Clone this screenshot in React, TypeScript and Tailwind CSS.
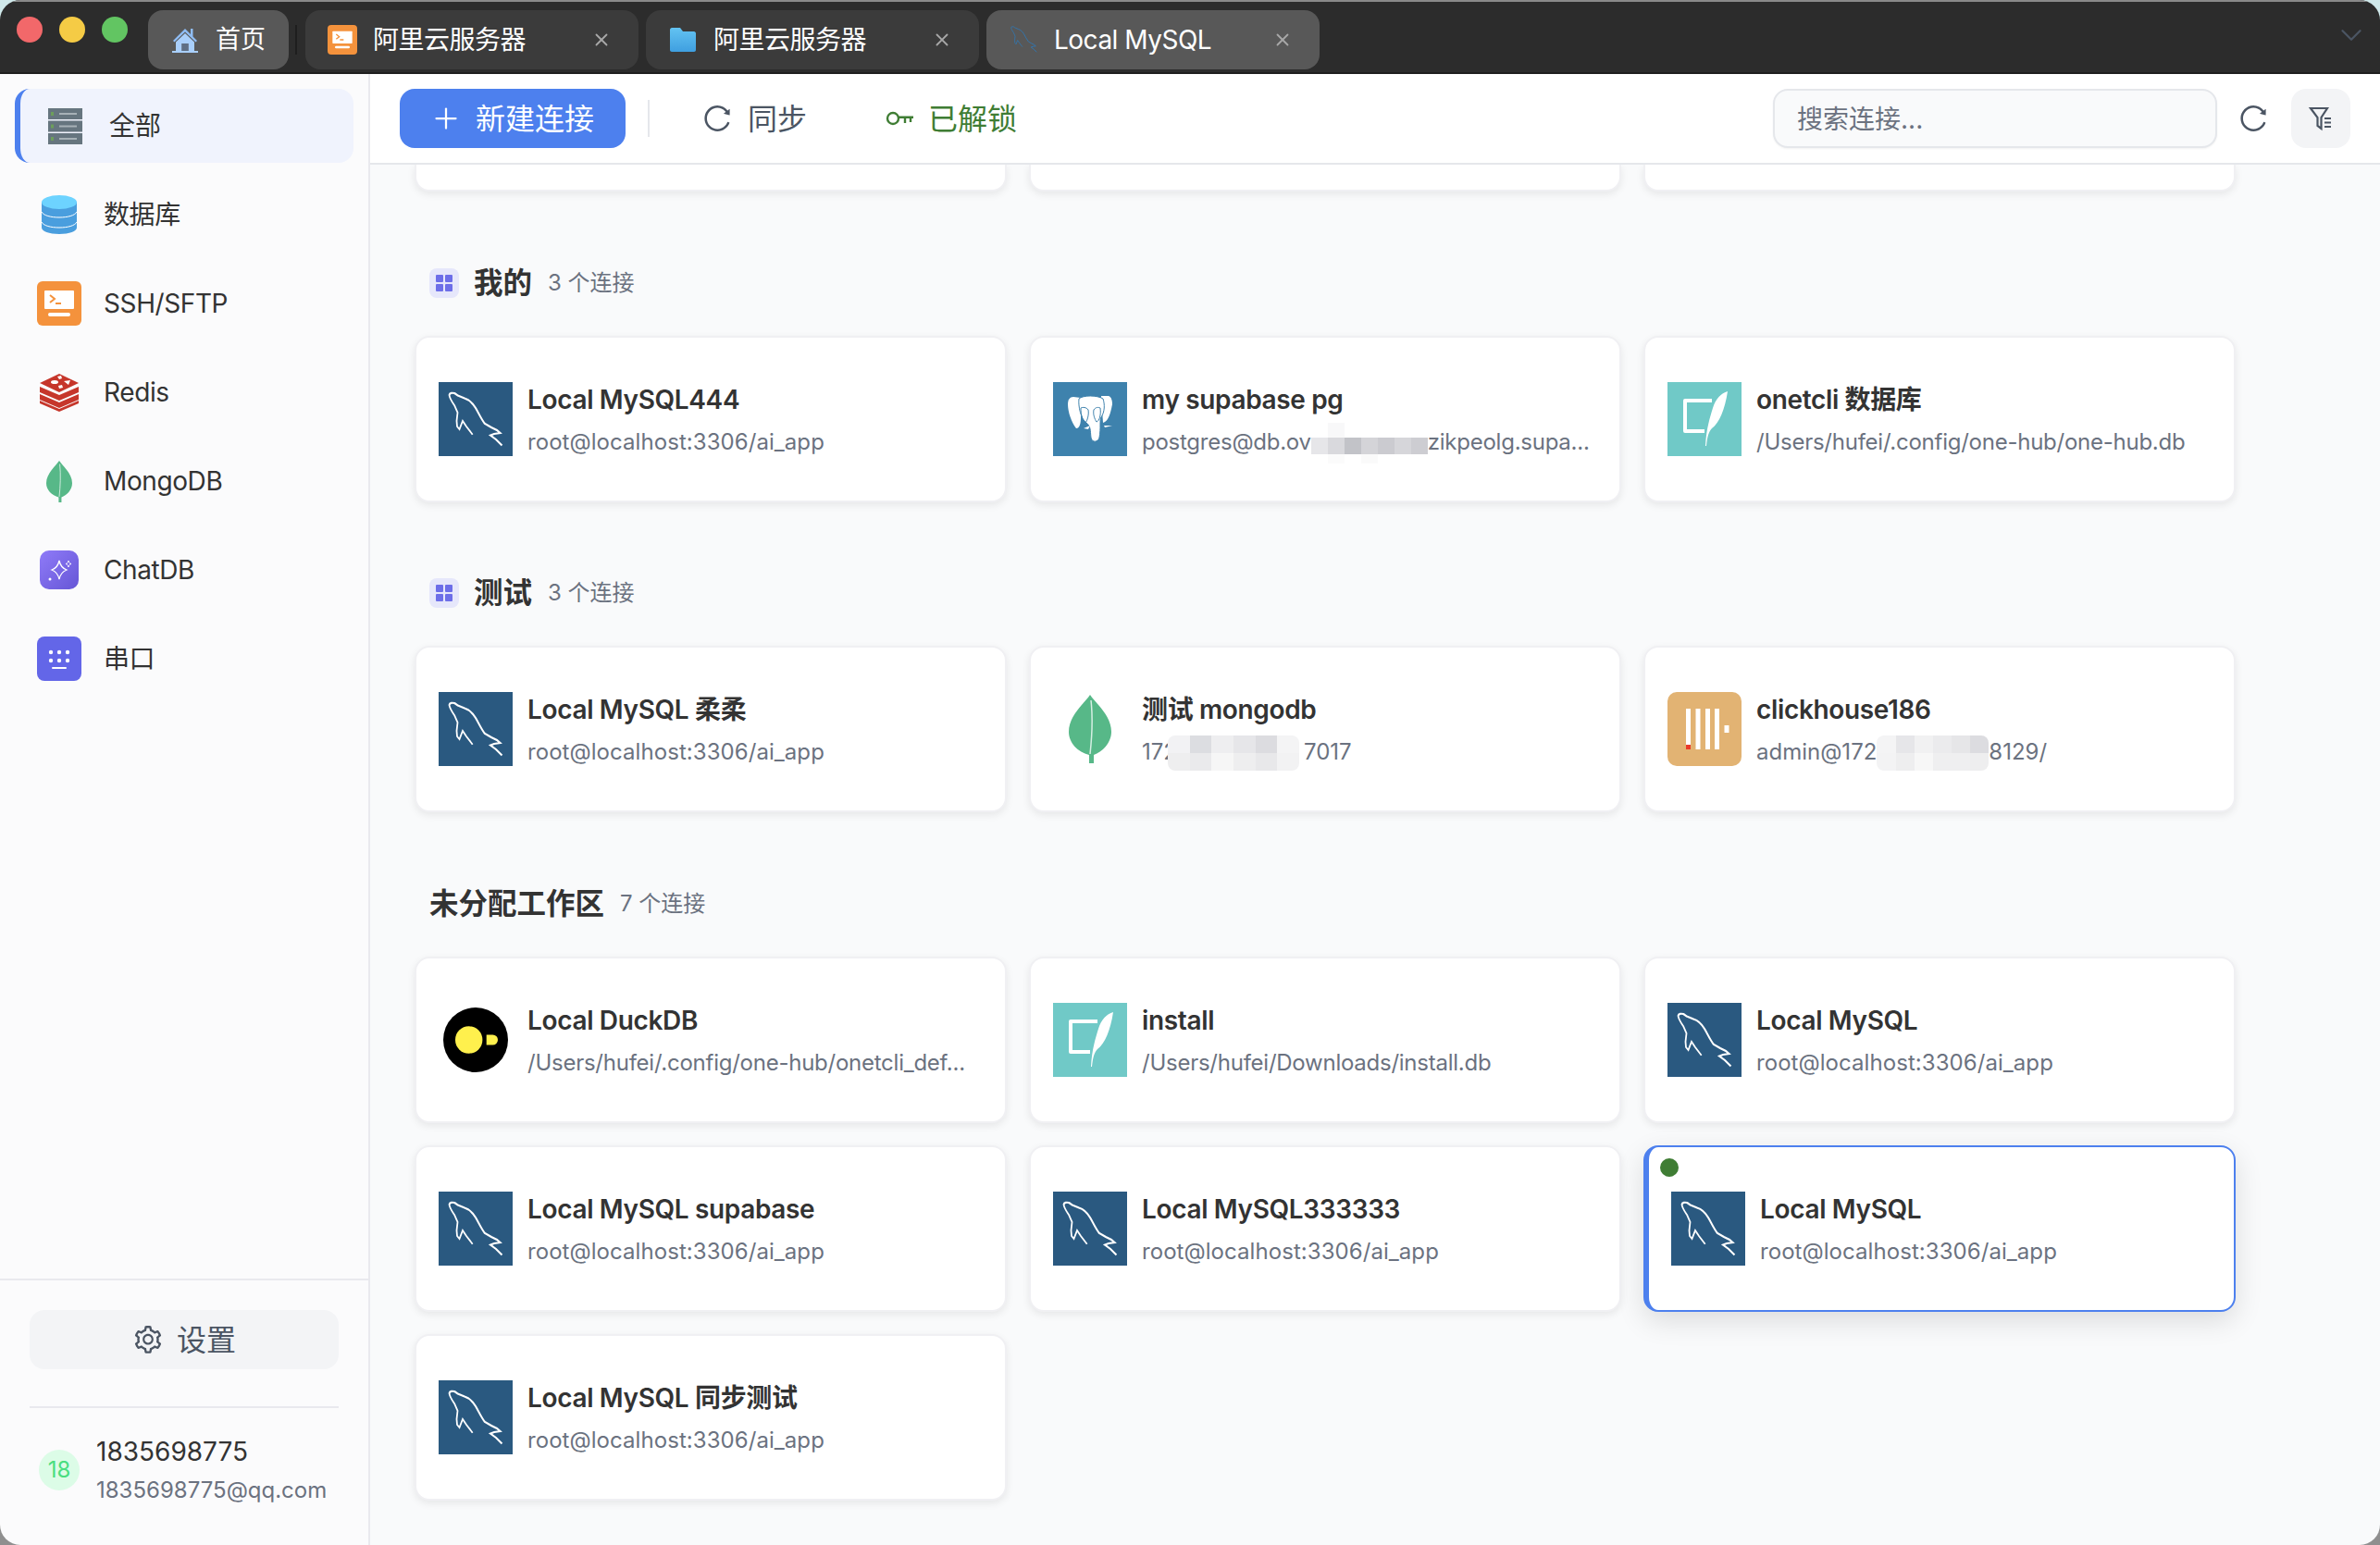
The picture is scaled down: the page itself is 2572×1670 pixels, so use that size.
import React from 'react';
import { ChevronDown, Plus, X } from 'lucide-react';
import { AiOutlineReload, AiOutlineSetting } from 'react-icons/ai';

const DOLPHIN_TOP = 'M11.5 14C12 11.5 15 11.5 17 12C19 13 20 14.5 22 15L28 17.5C33 19 37 23 40 28C43 33 46 40 50 45L57 49L63 52L66.5 55L60 56L56 57.5L62 62L68.5 68.5';
const DOLPHIN_BELLY = 'M11.5 14C12 18 15 22 17 25L20.5 33L19.5 42L20 48L22.5 51L26 42L30 48L36.7 56.7';

function MysqlIcon() {
  return (
    <svg width="80" height="80" viewBox="0 0 80 80" className="shrink-0">
      <rect width="80" height="80" fill="#2a5980" />
      <path d={DOLPHIN_TOP} fill="none" stroke="#fff" strokeWidth="2.1" />
      <path d={DOLPHIN_BELLY} fill="none" stroke="#fff" strokeWidth="1.8" />
    </svg>
  );
}

function PostgresIcon() {
  return (
    <svg width="80" height="80" viewBox="0 0 80 80" className="shrink-0">
      <rect width="80" height="80" fill="#3e82ad" />
      <path d="M22 16C18 16 16 19 16 24C16 32 20 44 25 50C29 50 30 44 30 38L30 17Z" fill="#fff" />
      <path d="M52 15L60 15C63 16 64 20 64 24C62 34 60 42 54 44Z" fill="#fff" />
      <path d="M28 18C32 14 48 14 54 18C56 24 56 32 52 38C50 40 52 50 50 60C49 65 42 66 41 60C40 52 41 48 36 44C30 40 27 26 28 18Z" fill="#fff" stroke="#3e82ad" strokeWidth="1" />
      <path d="M30 28C32 27 36 27 38 30C39 35 37 42 35 44C32 42 30 36 30 28Z" fill="none" stroke="#3e82ad" strokeWidth="1" />
      <path d="M51 28C49 27 46 27 44 30C43 35 45 40 47 43C50 42 52 36 51 28Z" fill="none" stroke="#3e82ad" strokeWidth="1" />
      <path d="M33 50L40 47L38 51Z" fill="#fff" />
      <path d="M55 47L64 47L56 49Z" fill="#fff" />
    </svg>
  );
}

function SqliteIcon() {
  return (
    <svg width="80" height="80" viewBox="0 0 80 80" className="shrink-0">
      <rect width="80" height="80" fill="#70c9c7" />
      <path d="M48 20H19V53H40" fill="none" stroke="#fff" strokeWidth="4" strokeLinejoin="round" />
      <path d="M65 10C58 12 52 18 49 28C46 38 42 50 41 69L42 69C43 58 45 53 48 50C56 44 62 30 65 10Z" fill="#fff" />
    </svg>
  );
}

function LeafIcon({ w, h }: { w: number; h: number }) {
  return (
    <svg width={w} height={h} viewBox="0 0 46 74" className="shrink-0">
      <path d="M23 0C28 8 46 22 46 40C46 52 36 62 27 65L27 74L22 74L22 65C10 62 0 52 0 40C0 22 18 8 23 0Z" fill="#57b888" />
      <path d="M24 6C26 24 25 46 23 64" fill="none" stroke="#d6efe3" strokeWidth="1.5" />
    </svg>
  );
}

function ClickhouseIcon() {
  return (
    <svg width="80" height="80" viewBox="0 0 80 80" className="shrink-0">
      <rect width="80" height="80" rx="10" fill="#e2b373" />
      <rect x="20" y="18" width="5" height="44" fill="#fff" />
      <rect x="30.5" y="18" width="5" height="44" fill="#fff" />
      <rect x="41" y="18" width="5" height="44" fill="#fff" />
      <rect x="51" y="18" width="5" height="44" fill="#fff" />
      <rect x="61.5" y="36" width="5" height="8" fill="#fff" />
      <rect x="20" y="57" width="5" height="5" fill="#ea3a2a" />
    </svg>
  );
}

function DuckdbIcon() {
  return (
    <svg width="80" height="80" viewBox="0 0 80 80" className="shrink-0">
      <circle cx="40" cy="40" r="35" fill="#000" />
      <circle cx="32.7" cy="40" r="14.7" fill="#fff04d" />
      <path d="M51.7 34.5H58.5A5.5 5.5 0 0 1 58.5 45.5H51.7Z" fill="#fff04d" />
    </svg>
  );
}

function TerminalIcon({ size }: { size: number }) {
  return (
    <svg width={size} height={size} viewBox="0 0 48 48" className="shrink-0">
      <rect width="48" height="48" rx="6" fill="#f4923c" />
      <rect x="8" y="10" width="32" height="20" rx="1" fill="#fff" />
      <path d="M14 15L19 19L14 23M20 24H26" fill="none" stroke="#f4923c" strokeWidth="2" />
      <rect x="12" y="34" width="24" height="4" rx="2" fill="#fff" />
    </svg>
  );
}

function FolderIcon() {
  return (
    <svg width="28" height="26" viewBox="0 0 28 26" className="shrink-0">
      <defs>
        <linearGradient id="folderFill" x1="0" y1="0" x2="0" y2="1">
          <stop offset="0" stopColor="#63c3f2" />
          <stop offset="1" stopColor="#3f9fe0" />
        </linearGradient>
      </defs>
      <path d="M0 2C0 1 1 0 2 0H11L14 4H26C27 4 28 5 28 6V24C28 25 27 26 26 26H2C1 26 0 25 0 24Z" fill="url(#folderFill)" />
    </svg>
  );
}

function HomeIcon() {
  return (
    <svg width="28" height="28" viewBox="0 0 28 28" className="shrink-0">
      <path d="M14 2L1 15L2.5 16.5L14 5.5L25.5 16.5L27 15L22.5 10.5V2H20V8Z" fill="#8fbdf5" />
      <path d="M4 16.5L14 7L24 16.5V26H17.5V18H10.5V26H4Z" fill="#a9cffb" />
      <rect x="10.5" y="18" width="7" height="8" fill="#5f6f85" />
      <rect y="26" width="28" height="2" fill="#a9cffb" />
    </svg>
  );
}

function TabDolphin() {
  return (
    <svg width="32" height="32" viewBox="6 8 66 66" className="shrink-0">
      <path d={DOLPHIN_TOP} fill="none" stroke="#2f78b5" strokeWidth="1.8" />
      <path d={DOLPHIN_BELLY} fill="none" stroke="#2f78b5" strokeWidth="1.6" />
    </svg>
  );
}

function ServerStackIcon() {
  return (
    <svg width="37" height="39" viewBox="0 0 37 39" className="shrink-0">
      {[0, 13.5, 27].map((y) => (
        <g key={y}>
          <rect y={y} width="37" height="12" fill="#66757f" />
          <rect x="3" y={y + 4} width="3" height="4" fill="#6d9e5b" />
          <rect x="12" y={y + 5} width="19" height="2" fill="#a7b1b7" />
        </g>
      ))}
    </svg>
  );
}

function DatabaseIcon() {
  return (
    <svg width="38" height="42" viewBox="0 0 38 42" className="shrink-0">
      <path d="M0 7V35C0 39 8 42 19 42C30 42 38 39 38 35V7Z" fill="#4a9ede" />
      <ellipse cx="19" cy="7.5" rx="19" ry="7.5" fill="#6dd3ff" />
      <path d="M0 18C2 22 10 24 19 24C28 24 36 22 38 18M0 29C2 33 10 35 19 35C28 35 36 33 38 29" fill="none" stroke="#fff" strokeWidth="1" />
    </svg>
  );
}

function RedisIcon() {
  return (
    <svg width="42" height="41" viewBox="0 0 42 41" className="shrink-0">
      <path d="M0 22L21 31L42 22V28L21 37L0 28Z" fill="#c6362b" />
      <path d="M0 29L21 38L42 29V32L21 41L0 32Z" fill="#c6362b" />
      <path d="M0 14L21 23L42 14V20L21 29L0 20Z" fill="#c6362b" />
      <path d="M21 0L42 10L21 20L0 10Z" fill="#c6362b" />
      <path d="M26 8L33 7L31 12ZM12 9A4 2 0 1 0 20 9A4 2 0 1 0 12 9ZM19 3L23 2L24 5L21 6ZM20 13L24 12L25 15L21 16Z" fill="#fff" />
    </svg>
  );
}

function ChatDbIcon() {
  return (
    <svg width="42" height="42" viewBox="0 0 42 42" className="shrink-0">
      <defs>
        <linearGradient id="chatFill" x1="0" y1="0" x2="1" y2="1">
          <stop offset="0" stopColor="#8f7bf8" />
          <stop offset="1" stopColor="#6656d6" />
        </linearGradient>
      </defs>
      <rect width="42" height="42" rx="10" fill="url(#chatFill)" />
      <path d="M21 11C22 16 24 19 29 21C24 23 22 26 21 31C20 26 18 23 13 21C18 19 20 16 21 11Z" fill="none" stroke="#fff" strokeWidth="1.3" />
      <path d="M31 11C31.5 13 32 14 34 14.500C32 15 31.500 16 31 18C30.500 16 30 15 28 14.500C30 14 30.500 13 31 11Z" fill="none" stroke="#fff" strokeWidth="0.9" />
      <circle cx="11" cy="31" r="1.500" fill="#fff" />
    </svg>
  );
}

function SerialIcon() {
  return (
    <svg width="48" height="48" viewBox="0 0 48 48" className="shrink-0">
      <rect width="48" height="48" rx="8" fill="#6366e8" />
      {[15, 24, 33].map((x) => (
        <g key={x}>
          <circle cx={x} cy="17" r="2.200" fill="#fff" />
          <circle cx={x} cy="26" r="2.200" fill="#fff" />
        </g>
      ))}
      <rect x="16" y="33" width="16" height="2" rx="1" fill="#fff" />
    </svg>
  );
}

function WorkspaceIcon() {
  return (
    <div className="flex h-8 w-8 shrink-0 items-center justify-center rounded-lg bg-[#e6e7fb]">
      <svg width="18" height="18" viewBox="0 0 18 18">
        <rect width="8" height="8" rx="1" fill="#6d6ee8" />
        <rect x="10" width="8" height="8" rx="1" fill="#6d6ee8" />
        <rect y="10" width="8" height="8" rx="1" fill="#6d6ee8" />
        <rect x="10" y="10" width="8" height="8" rx="1" fill="#6d6ee8" />
      </svg>
    </div>
  );
}

function KeyIcon() {
  return (
    <svg width="30" height="16" viewBox="0 0 30 16" className="shrink-0">
      <circle cx="8" cy="8" r="6" fill="none" stroke="#3f7d34" strokeWidth="2.400" />
      <path d="M14 6.800H30M21 7V13M27 7V12" fill="none" stroke="#3f7d34" strokeWidth="2.400" />
    </svg>
  );
}

function FilterIcon() {
  return (
    <svg width="28" height="28" viewBox="0 0 28 28">
      <path d="M3 3H21L14.500 13V25L10.500 22V13Z" fill="none" stroke="#4b5563" strokeWidth="2.200" />
      <path d="M18 14H25M18 18.500H25M18 23H25" stroke="#4b5563" strokeWidth="2.200" />
    </svg>
  );
}

// pixelated patches that hide parts of the hosts in the screenshot
function Mosaic({ width, rows }: { width: number; rows: { h: number; colors: string[] }[] }) {
  return (
    <span className="-my-[8px] inline-flex flex-col overflow-hidden rounded-lg align-middle" style={{ width }}>
      {rows.map((row, i) => (
        <span key={i} className="flex" style={{ height: row.h }}>
          {row.colors.map((c, j) => (
            <span key={j} className="flex-1" style={{ backgroundColor: c }} />
          ))}
        </span>
      ))}
    </span>
  );
}

const MOSAIC_PG = [
  { h: 16, colors: ['#ffffff', '#f8f8f9', '#ffffff', '#ffffff', '#ffffff', '#ffffff', '#ffffff'] },
  { h: 18, colors: ['#e6e6e9', '#d9d9dd', '#c2c3c8', '#d4d4d8', '#cbcbd0', '#d6d6da', '#cdcdd2'] },
  { h: 10, colors: ['#ffffff', '#fbfbfb', '#ffffff', '#fafafa', '#ffffff', '#ffffff', '#ffffff'] },
];

const MOSAIC_MONGO = [
  { h: 19, colors: ['#f2f2f4', '#dcdde1', '#eeeef0', '#e6e6e9', '#dcdce0', '#f4f4f5'] },
  { h: 19, colors: ['#eeeeef', '#eaeaec', '#f6f6f6', '#eeeeef', '#e8e8ea', '#f2f2f3'] },
];

const MOSAIC_CLICK = [
  { h: 19, colors: ['#f4f4f5', '#e6e6e9', '#f1f1f2', '#ebebed', '#e6e6e8', '#dcdce0'] },
  { h: 19, colors: ['#f3f3f4', '#eeeeef', '#f7f7f7', '#efeff0', '#efeff0', '#eeeeef'] },
];

interface Conn {
  title: string;
  sub: React.ReactNode;
  icon?: 'mysql' | 'pg' | 'sqlite' | 'mongo' | 'click' | 'duck';
  active?: boolean;
}

const MYSQL_SUB = <span className="tracking-[0.06px]">root@localhost:3306/ai_app</span>;

const mine: Conn[] = [
  { title: 'Local MySQL444', sub: MYSQL_SUB },
  {
    title: 'my supabase pg',
    icon: 'pg',
    sub: (
      <span className="tracking-[-0.25px]">
        postgres@db.ov
        <Mosaic width={126} rows={MOSAIC_PG} />
        zikpeolg.supa...
      </span>
    ),
  },
  { title: 'onetcli 数据库', icon: 'sqlite', sub: <span className="tracking-[-0.25px]">/Users/hufei/.config/one-hub/one-hub.db</span> },
];

const tests: Conn[] = [
  { title: 'Local MySQL 柔柔', sub: MYSQL_SUB },
  {
    title: '测试 mongodb',
    icon: 'mongo',
    sub: (
      <>
        172
        <span className="-ml-[10px]"><Mosaic width={142} rows={MOSAIC_MONGO} /></span>
        <span className="ml-[5px]">7017</span>
      </>
    ),
  },
  {
    title: 'clickhouse186',
    icon: 'click',
    sub: (
      <>
        admin@172
        <Mosaic width={121} rows={MOSAIC_CLICK} />
        8129/
      </>
    ),
  },
];

const unassigned: Conn[] = [
  { title: 'Local DuckDB', icon: 'duck', sub: <span className="tracking-[-0.25px]">/Users/hufei/.config/one-hub/onetcli_def...</span> },
  { title: 'install', icon: 'sqlite', sub: <span className="tracking-[-0.25px]">/Users/hufei/Downloads/install.db</span> },
  { title: 'Local MySQL', sub: MYSQL_SUB },
  { title: 'Local MySQL supabase', sub: MYSQL_SUB },
  { title: 'Local MySQL333333', sub: MYSQL_SUB },
  { title: 'Local MySQL', sub: MYSQL_SUB, active: true },
  { title: 'Local MySQL 同步测试', sub: MYSQL_SUB },
];

function ConnIcon({ icon }: { icon: Conn['icon'] }) {
  if (icon === 'pg') return <PostgresIcon />;
  if (icon === 'sqlite') return <SqliteIcon />;
  if (icon === 'click') return <ClickhouseIcon />;
  if (icon === 'duck') return <DuckdbIcon />;
  if (icon === 'mongo') {
    return (
      <div className="flex h-20 w-20 shrink-0 items-center justify-center">
        <LeafIcon w={46} h={74} />
      </div>
    );
  }
  return <MysqlIcon />;
}

function ConnCard({ conn }: { conn: Conn }) {
  return (
    <div
      className={
        conn.active
          ? 'relative flex h-[180px] items-center gap-4 rounded-2xl border-2 border-l-[6px] border-[#4d80ee] bg-white pl-6 shadow-[0_10px_30px_rgba(0,0,0,0.12)]'
          : 'flex h-[180px] items-center gap-4 rounded-2xl border-2 border-[#f0f0f3] bg-white pl-6 shadow-[0_3px_8px_rgba(0,0,0,0.08)]'
      }
    >
      {conn.active && <span className="absolute left-[12px] top-[12px] h-5 w-5 rounded-full bg-[#3f7d34]" />}
      <ConnIcon icon={conn.icon} />
      <div className="min-w-0">
        <div className="whitespace-nowrap text-[28px] font-semibold leading-[40px] tracking-[-0.35px] text-[#333333]">{conn.title}</div>
        <div className="mt-[10px] whitespace-nowrap text-[24px] leading-[32px] text-[#6b7280]">{conn.sub}</div>
      </div>
    </div>
  );
}

function Section({ name, count, workspace, conns, gapBelow }: { name: string; count: number; workspace?: boolean; conns: Conn[]; gapBelow: string }) {
  return (
    <section className={gapBelow}>
      <div className="mb-[34px] flex h-12 items-center pl-4 pt-[2px]">
        {workspace && <div className="mr-4"><WorkspaceIcon /></div>}
        <span className="text-[31.5px] font-semibold text-[#333333]">{name}</span>
        <span className="ml-[17px] text-[24px] text-[#6b7280]">{count} 个连接</span>
      </div>
      <div className="grid w-[1968px] grid-cols-3 gap-6">
        {conns.map((c, i) => (
          <ConnCard key={i} conn={c} />
        ))}
      </div>
    </section>
  );
}

function Tab({ icon, label, active }: { icon: React.ReactNode; label: string; active?: boolean }) {
  return (
    <div className={`flex h-16 w-[360px] items-center rounded-2xl pl-6 pr-[29px] ${active ? 'bg-[#585858]' : 'bg-[#3b3b3b]'}`}>
      <div className="flex w-8 justify-center">{icon}</div>
      <span className="ml-[17px] text-[28px] tracking-[-0.5px] text-white">{label}</span>
      <X size={22} strokeWidth={2} className="ml-auto text-[#a8a8a8]" />
    </div>
  );
}

function NavItem({ icon, label }: { icon: React.ReactNode; label: string }) {
  return (
    <div className="flex h-20 items-center gap-6 pl-6">
      <div className="flex w-12 justify-center">{icon}</div>
      <span className="text-[28px] tracking-[-0.4px] text-[#333333]">{label}</span>
    </div>
  );
}

export default function App() {
  return (
    <div className="h-[1670px] w-[2572px] bg-linear-to-b from-[#cfe8ea] from-50% to-[#8f8f8f] to-50% font-[Inter,'Noto_Sans_CJK_SC',sans-serif]">
      <div className="flex h-full flex-col overflow-hidden rounded-[22px]">
        {/* title bar */}
        <header className="flex h-20 shrink-0 items-start border-t-2 border-b-2 border-t-[#8a8a8a] border-b-[#1e1e1e] bg-[#2c2c2c] pl-[18px] pt-[9px]">
          <div className="mt-[7px] flex gap-[18px]">
            <span className="h-7 w-7 rounded-full bg-[#f2686a]" />
            <span className="h-7 w-7 rounded-full bg-[#f5cb45]" />
            <span className="h-7 w-7 rounded-full bg-[#62c562]" />
          </div>
          <div className="ml-[22px] flex h-16 w-[152px] items-center rounded-2xl bg-[#585858] pl-[26px]">
            <HomeIcon />
            <span className="ml-[19px] text-[27px] text-white">首页</span>
          </div>
          <span className="ml-[7px] mr-[9px] mt-4 h-8 w-0.5 bg-[#1e1e1e]" />
          <div className="flex gap-2">
            <Tab icon={<TerminalIcon size={32} />} label="阿里云服务器" />
            <Tab icon={<FolderIcon />} label="阿里云服务器" />
            <Tab icon={<TabDolphin />} label="Local MySQL" active />
          </div>
          <ChevronDown size={38} strokeWidth={1.4} className="ml-auto mr-3 mt-2 text-[#4b5563]" />
        </header>

        <div className="flex min-h-0 flex-1">
          {/* sidebar */}
          <aside className="flex w-[400px] shrink-0 flex-col border-r-2 border-[#e9e9ee] bg-[#fbfbfc]">
            <nav className="flex flex-col gap-4 px-4 pt-4">
              <div className="flex h-20 w-[366px] items-center gap-6 rounded-2xl border-l-[6px] border-[#4d80ee] bg-[#f0f3fd] pl-6">
                <div className="flex w-12 justify-center"><ServerStackIcon /></div>
                <span className="text-[28px] text-[#333333]">全部</span>
              </div>
              <NavItem icon={<DatabaseIcon />} label="数据库" />
              <NavItem icon={<TerminalIcon size={48} />} label="SSH/SFTP" />
              <NavItem icon={<RedisIcon />} label="Redis" />
              <NavItem icon={<LeafIcon w={28} h={47} />} label="MongoDB" />
              <NavItem icon={<ChatDbIcon />} label="ChatDB" />
              <NavItem icon={<SerialIcon />} label="串口" />
            </nav>
            <div className="mt-auto h-[288px] border-t-2 border-[#e9e9ee] px-8 pt-8">
              <div className="flex h-16 items-center justify-center gap-[14px] rounded-2xl bg-[#f3f4f6] text-[#4b5563]">
                <AiOutlineSetting size={34} />
                <span className="pt-[2px] text-[32px]">设置</span>
              </div>
              <div className="mt-10 h-0.5 bg-[#e9e9ee]" />
              <div className="mt-[27px] flex items-center pl-[10px]">
                <div className="flex h-11 w-11 shrink-0 items-center justify-center rounded-full bg-[#dcfce7] text-[24px] text-[#4ade80]">18</div>
                <div className="ml-[18px]">
                  <div className="text-[28px] leading-[40px] text-[#333333]">1835698775</div>
                  <div className="mt-[4px] text-[24px] leading-[36px] text-[#6b7280]">1835698775@qq.com</div>
                </div>
              </div>
            </div>
          </aside>

          {/* main */}
          <main className="flex min-w-0 flex-1 flex-col bg-[#f9fafb]">
            <div className="flex h-[98px] shrink-0 items-center border-b-2 border-[#e5e7eb] bg-white px-8">
              <div className="flex h-16 w-[244px] items-center rounded-2xl bg-[#4d80ee] pl-8 text-white">
                <Plus size={36} strokeWidth={1.5} />
                <span className="ml-[14px] pt-[2px] text-[32px]">新建连接</span>
              </div>
              <span className="ml-6 h-10 w-0.5 bg-[#e5e7eb]" />
              <AiOutlineReload size={34} className="ml-[56px] text-[#4b5563]" />
              <span className="ml-[16px] pt-[2px] text-[32px] text-[#4b5563]">同步</span>
              <div className="ml-[85px]"><KeyIcon /></div>
              <span className="ml-4 pt-[2px] text-[32px] text-[#3f7d34]">已解锁</span>
              <div className="ml-auto flex h-16 w-[480px] items-center rounded-2xl border-2 border-[#e5e7eb] bg-[#f9fafb] pl-6 pt-[2px] text-[28px] text-[#6b7280] shadow-[0_1px_2px_rgba(0,0,0,0.05)]">
                搜索连接...
              </div>
              <AiOutlineReload size={34} className="ml-[22px] text-[#4b5563]" />
              <div className="ml-6 flex h-16 w-16 items-center justify-center rounded-2xl bg-[#f3f4f6]"><FilterIcon /></div>
            </div>

            <div className="min-h-0 flex-1 overflow-hidden pl-12">
              {/* cards of the section above, scrolled off the top */}
              <div className="mb-[74px] grid w-[1968px] grid-cols-3 gap-6">
                {[0, 1, 2].map((i) => (
                  <div key={i} className="h-[29px] rounded-b-2xl border-2 border-t-0 border-[#f0f0f3] bg-white shadow-[0_3px_8px_rgba(0,0,0,0.08)]" />
                ))}
              </div>
              <Section name="我的" count={3} workspace conns={mine} gapBelow="mb-[73px]" />
              <Section name="测试" count={3} workspace conns={tests} gapBelow="mb-[74px]" />
              <Section name="未分配工作区" count={7} conns={unassigned} gapBelow="mb-0" />
            </div>
          </main>
        </div>
      </div>
    </div>
  );
}
